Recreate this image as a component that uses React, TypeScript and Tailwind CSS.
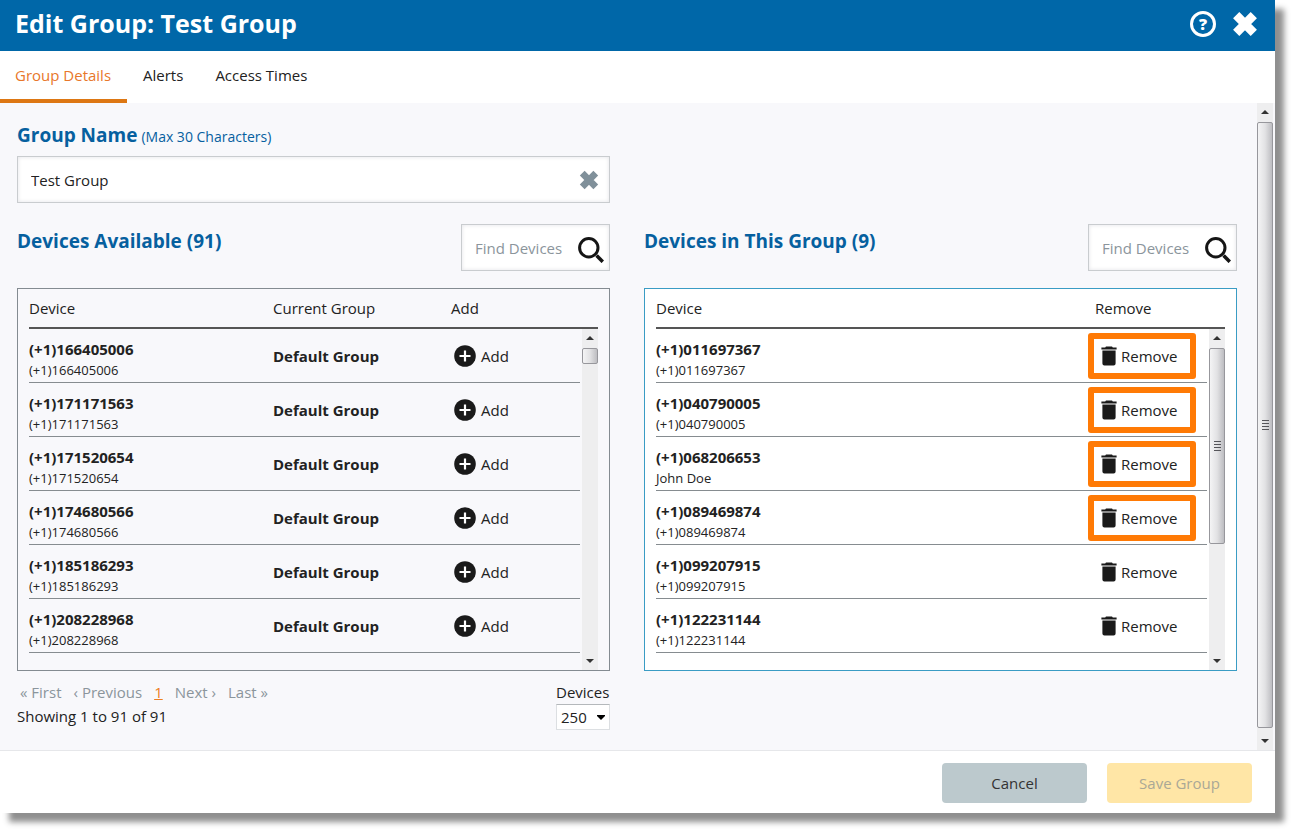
import { useState } from 'react'
import { twMerge } from 'tailwind-merge'

type Device = { id: string; number: string; name: string; highlighted?: boolean }

const available: Device[] = [
  '166405006',
  '171171563',
  '171520654',
  '174680566',
  '185186293',
  '208228968'
].map((n) => ({ id: n, number: `(+1)${n}`, name: `(+1)${n}` }))

const inGroup: Device[] = [
  { id: '1', number: '(+1)011697367', name: '(+1)011697367', highlighted: true },
  { id: '2', number: '(+1)040790005', name: '(+1)040790005', highlighted: true },
  { id: '3', number: '(+1)068206653', name: 'John Doe', highlighted: true },
  { id: '4', number: '(+1)089469874', name: '(+1)089469874', highlighted: true },
  { id: '5', number: '(+1)099207915', name: '(+1)099207915' },
  { id: '6', number: '(+1)122231144', name: '(+1)122231144' }
]

function CrossIcon({ className }: { className?: string }) {
  return (
    <svg viewBox="0 0 26 26" className={className} aria-hidden="true">
      <path
        d="M4.2 4.2 21.8 21.8M21.8 4.2 4.2 21.8"
        stroke="currentColor"
        strokeWidth="8.8"
        fill="none"
      />
    </svg>
  )
}

function SearchIcon() {
  return (
    <svg viewBox="0 0 26 26" className="size-[26px] shrink-0 text-[#151515]" aria-hidden="true">
      <circle cx="10.8" cy="10.8" r="9.2" fill="none" stroke="currentColor" strokeWidth="3" />
      <path d="m18.6 18.6 6.2 6.2" stroke="currentColor" strokeWidth="3.6" />
    </svg>
  )
}

function AddIcon() {
  return (
    <svg viewBox="0 0 22 22" className="size-[22px]" aria-hidden="true">
      <circle cx="11" cy="11" r="10.8" fill="#1a1a1a" />
      <path d="M11 5.5v11M5.5 11h11" stroke="#fff" strokeWidth="2.2" />
    </svg>
  )
}

function TrashIcon() {
  return (
    <svg viewBox="0 0 16 20" className="h-5 w-4" aria-hidden="true">
      <path
        d="M5 .4h6l.8 1H15.6v2H.4v-2H4.2zM1.4 4.4h13.2v13a2 2 0 0 1-2 2H3.4a2 2 0 0 1-2-2z"
        fill="#1a1a1a"
      />
    </svg>
  )
}

function Arrow({ down }: { down?: boolean }) {
  return (
    <div className="flex h-[18px] shrink-0 items-center justify-center">
      <svg viewBox="0 0 8 4" className="h-1 w-2" aria-hidden="true">
        <path d={down ? 'M0 0h8L4 4z' : 'M0 4h8L4 0z'} fill="#333" />
      </svg>
    </div>
  )
}

function Scrollbar({ thumb, grip }: { thumb: string; grip?: boolean }) {
  return (
    <div className="flex h-full w-full flex-col bg-[#eeeeef]" aria-hidden="true">
      <Arrow />
      <div className="min-h-0 flex-1 pt-px pb-1">
        <div
          className={twMerge(
            'flex w-full flex-col items-center justify-center gap-[2px] rounded-xs border border-[#97979c] bg-linear-to-r from-[#f4f4f5] via-[#e2e2e4] to-[#bdbdc1]',
            thumb
          )}
        >
          {grip && [0, 1, 2, 3].map((i) => <div key={i} className="h-px w-[7px] bg-[#55555a]" />)}
        </div>
      </div>
      <Arrow down />
    </div>
  )
}

function FindDevices({ label }: { label: string }) {
  return (
    <div className="flex h-[47px] w-[149px] items-center border border-[#c9cccf] bg-white pr-[5px] pl-[13px] inset-shadow-[0_0_4px_#e4e4e8]">
      <input
        type="search"
        aria-label={label}
        placeholder="Find Devices"
        className="w-0 flex-1 bg-transparent outline-none placeholder:text-[#8b959c]"
      />
      <button type="button" aria-label="Search" className="mt-1">
        <SearchIcon />
      </button>
    </div>
  )
}

function DeviceCell({ device }: { device: Device }) {
  return (
    <td className="border-b border-[#868c90] pt-[7px]">
      <div className="leading-[22px] font-bold">{device.number}</div>
      <div className="text-[13px] leading-5">{device.name}</div>
    </td>
  )
}

function ListFrame({
  children,
  className,
  thumb,
  grip
}: {
  children: React.ReactNode
  className: string
  thumb: string
  grip?: boolean
}) {
  return (
    <div className={twMerge('flex h-[383px] items-start border px-[11px]', className)}>
      {children}
      <div className="mt-[38px] h-[343px] w-[18px] shrink-0 border-t-2 border-[#555] pl-[2px]">
        <Scrollbar thumb={thumb} grip={grip} />
      </div>
    </div>
  )
}

function AvailableDevices() {
  return (
    <section className="min-w-0">
      <div className="flex justify-between">
        <h2 className="mt-[3px] text-[19px] leading-7 font-bold text-[#06609f]">
          Devices Available (91)
        </h2>
        <FindDevices label="Find available devices" />
      </div>
      <ListFrame className="mt-[17px] border-[#848b91]" thumb="h-4">
        <table className="min-w-0 flex-1 table-fixed border-separate border-spacing-0 text-left">
          <thead>
            <tr className="h-10">
              <th className="border-b-2 border-[#555] font-normal">Device</th>
              <th className="w-[178px] border-b-2 border-[#555] font-normal">Current Group</th>
              <th className="w-[129px] border-b-2 border-[#555] font-normal">Add</th>
            </tr>
          </thead>
          <tbody>
            {available.map((d) => (
              <tr key={d.id} className="h-[54px]">
                <DeviceCell device={d} />
                <td className="border-b border-[#868c90] font-bold">Default Group</td>
                <td className="border-b border-[#868c90]">
                  <button type="button" className="ml-[3px] flex items-center gap-[5px]">
                    <AddIcon />
                    Add
                  </button>
                </td>
              </tr>
            ))}
          </tbody>
        </table>
      </ListFrame>
      <div className="mt-[9px] flex justify-between">
        <div className="leading-6">
          <nav aria-label="Pagination" className="flex gap-3 pl-[3px] text-[#8b959c]">
            <a href="#first">« First</a>
            <a href="#previous">‹ Previous</a>
            <a href="#1" className="text-[#ee7d22] underline">
              1
            </a>
            <a href="#next">Next ›</a>
            <a href="#last">Last »</a>
          </nav>
          <p>Showing 1 to 91 of 91</p>
        </div>
        <div className="w-[54px]">
          <label htmlFor="page-size" className="block leading-6">
            Devices
          </label>
          <div className="relative">
            <select
              id="page-size"
              defaultValue="250"
              className="h-[26px] w-full appearance-none border border-[#dcdfe2] border-t-[#b4b8bb] bg-white pl-1"
            >
              <option>50</option>
              <option>100</option>
              <option>250</option>
            </select>
            <svg
              viewBox="0 0 8 5"
              className="pointer-events-none absolute top-[11px] right-[5px] h-[5px] w-2"
              aria-hidden="true"
            >
              <path d="M0 0h8v1L4 5 0 1z" />
            </svg>
          </div>
        </div>
      </div>
    </section>
  )
}

function GroupDevices() {
  return (
    <section className="min-w-0">
      <div className="flex justify-between">
        <h2 className="mt-[3px] text-[19px] leading-7 font-bold text-[#06609f]">
          Devices in This Group (9)
        </h2>
        <FindDevices label="Find devices in this group" />
      </div>
      <ListFrame className="mt-[17px] border-[#3a9cc4] bg-white" thumb="h-[196px]" grip>
        <table className="min-w-0 flex-1 table-fixed border-separate border-spacing-0 text-left">
          <thead>
            <tr className="h-10">
              <th className="border-b-2 border-[#555] font-normal">Device</th>
              <th className="w-[112px] border-b-2 border-[#555] font-normal">Remove</th>
            </tr>
          </thead>
          <tbody>
            {inGroup.map((d) => (
              <tr key={d.id} className="h-[54px]">
                <DeviceCell device={d} />
                <td className="relative border-b border-[#868c90]">
                  <button type="button" className="ml-[6px] flex items-center gap-1">
                    <TrashIcon />
                    Remove
                  </button>
                  {d.highlighted && (
                    <div className="pointer-events-none absolute top-1 -left-[7px] h-[46px] w-[108px] rounded-[3px] border-6 border-[#ff7a05]" />
                  )}
                </td>
              </tr>
            ))}
          </tbody>
        </table>
      </ListFrame>
    </section>
  )
}

const tabs = ['Group Details', 'Alerts', 'Access Times']

export default function App() {
  const [tab, setTab] = useState(tabs[0])
  const [name, setName] = useState('Test Group')

  return (
    <div className="bg-white pr-[18px] pb-[18px] font-['Open_Sans','Noto_Sans',sans-serif] text-[15px] leading-5 text-[#222]">
      <div className="bg-white shadow-[9px_9px_6px_#8f8f8f]">
        <header className="flex h-[51px] items-center justify-between bg-[#0067a8] pr-[17px] pb-[3px] pl-[15px] text-white">
          <h1 className="pb-[3px] text-[25px] leading-8 font-bold">Edit Group: Test Group</h1>
          <div className="flex items-center gap-4">
            <button
              type="button"
              aria-label="Help"
              className="flex size-[26px] items-center justify-center rounded-full border-3 border-white text-base leading-5 font-extrabold"
            >
              ?
            </button>
            <button type="button" aria-label="Close">
              <CrossIcon className="size-[26px]" />
            </button>
          </div>
        </header>

        <div role="tablist" className="flex h-[52px]">
          {tabs.map((t) => (
            <button
              key={t}
              type="button"
              role="tab"
              aria-selected={t === tab}
              onClick={() => setTab(t)}
              className={twMerge(
                'border-b-4 border-transparent px-4 first:pl-[15px]',
                t === tab && 'border-[#dd7713] text-[#e8772a]'
              )}
            >
              {t}
            </button>
          ))}
        </div>

        <div className="flex border-b border-[#e6e7ea] bg-[#f8f8fb]">
          <main className="min-w-0 flex-1 pt-[18px] pr-5 pb-5 pl-[17px]">
            <div className="grid grid-cols-2 gap-[34px]">
              <div>
                <label htmlFor="group-name" className="flex items-baseline gap-1 text-[#06609f]">
                  <span className="text-[19px] leading-7 font-bold">Group Name</span>
                  <span className="text-sm">(Max 30 Characters)</span>
                </label>
                <div className="mt-[7px] flex h-[47px] items-center border border-[#c9cccf] bg-white pr-[10px] pl-[13px] inset-shadow-[0_0_4px_#e4e4e8]">
                  <input
                    id="group-name"
                    maxLength={30}
                    value={name}
                    onChange={(e) => setName(e.target.value)}
                    className="min-w-0 flex-1 bg-transparent outline-none"
                  />
                  <button type="button" aria-label="Clear" onClick={() => setName('')}>
                    <CrossIcon className="size-5 text-[#80909a]" />
                  </button>
                </div>
              </div>
            </div>
            <div className="mt-[21px] grid grid-cols-2 gap-[34px]">
              <AvailableDevices />
              <GroupDevices />
            </div>
          </main>
          <div className="w-[18px] shrink-0 pr-[2px]">
            <Scrollbar thumb="h-full" grip />
          </div>
        </div>

        <footer className="flex justify-end gap-5 px-[23px] pt-3 pb-[10px]">
          <button type="button" className="h-10 w-[145px] rounded-sm bg-[#bcc9cd] text-[#333]">
            Cancel
          </button>
          <button
            type="button"
            disabled
            className="h-10 w-[145px] rounded-sm bg-[#ffe6a6] text-[#aaa896]"
          >
            Save Group
          </button>
        </footer>
      </div>
    </div>
  )
}
